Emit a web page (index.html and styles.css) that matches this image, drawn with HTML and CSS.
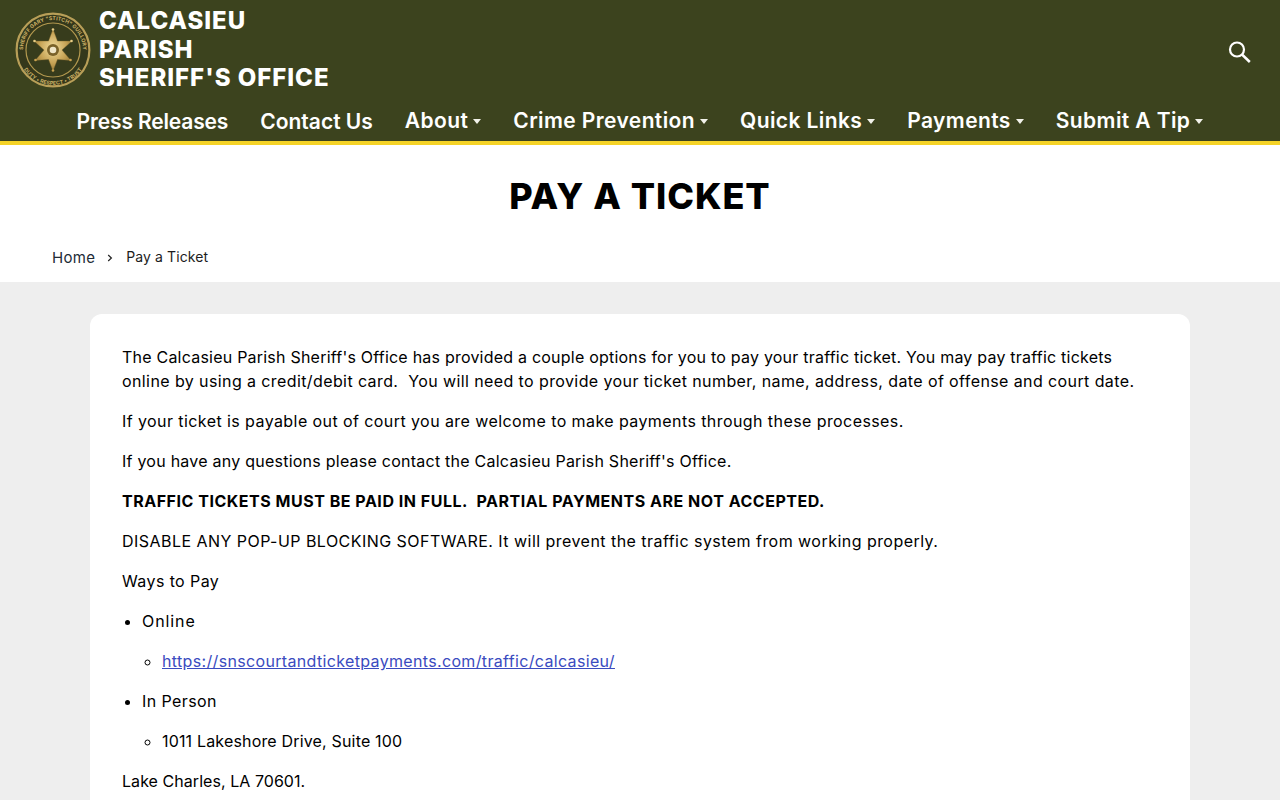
FILE: index.html
```html
<!DOCTYPE html>
<html lang="en">
<head>
<meta charset="utf-8">
<title>Pay a Ticket</title>
<link rel="stylesheet" href="styles.css">
</head>
<body>
<header class="site-header">
  <div class="top-row">
    <a class="brand" href="#">
      <svg class="seal" viewBox="0 0 76 76" aria-label="Sheriff seal">
        <defs>
          <radialGradient id="gold" cx="50%" cy="45%" r="60%">
            <stop offset="0" stop-color="#f1dc9c"/>
            <stop offset="0.6" stop-color="#c6a355"/>
            <stop offset="1" stop-color="#8f7433"/>
          </radialGradient>
          <path id="arcTop" d="M9.8 48.3 A30 30 0 1 1 66.2 48.3"/>
          <path id="arcBottom" d="M6.3 52.8 A35 35 0 0 0 69.7 52.8"/>
        </defs>
        <circle cx="38" cy="38" r="37.5" fill="#34381b"/>
        <circle cx="38" cy="38" r="36.4" fill="none" stroke="#b89f58" stroke-width="2.2"/>
        <circle cx="38" cy="38" r="27" fill="#373c1c" stroke="#b3994f" stroke-width="1.2"/>
        <text class="seal-text"><textPath href="#arcTop" startOffset="50%" text-anchor="middle">SHERIFF GARY "STITCH" GUILLORY</textPath></text>
        <text class="seal-text"><textPath href="#arcBottom" startOffset="50%" text-anchor="middle">DUTY • RESPECT • TRUST</textPath></text>
        <path d="M38 17 L42.5 29 L57 29 L47 38 L56 48.5 L42.5 47.5 L38 59 L33.5 47.5 L20 48.5 L29 38 L19 29 L33.5 29 Z" fill="url(#gold)" stroke="#6e5a26" stroke-width="0.4"/>
        <circle cx="38" cy="17.5" r="1.3" fill="#e8cd85"/>
        <circle cx="38" cy="58.5" r="1.3" fill="#c9a24f"/>
        <circle cx="19.5" cy="29" r="1.3" fill="#e8cd85"/>
        <circle cx="56.5" cy="29" r="1.3" fill="#e8cd85"/>
        <circle cx="20.5" cy="48" r="1.3" fill="#c9a24f"/>
        <circle cx="55.5" cy="48" r="1.3" fill="#c9a24f"/>
        <circle cx="38" cy="38" r="6" fill="#7a6229"/>
        <circle cx="38" cy="38" r="3.3" fill="#efe6c8"/>
      </svg>
      <span class="brand-name">CALCASIEU<br>PARISH<br>SHERIFF'S OFFICE</span>
    </a>
    <button class="search" type="button" aria-label="Search">
      <svg viewBox="0 0 24 24" width="24" height="24">
        <circle cx="9" cy="9.5" r="7" fill="none" stroke="#fff" stroke-width="2.2"/>
        <path d="M14 14.5 L21.8 22" stroke="#fff" stroke-width="2.5" fill="none"/>
      </svg>
    </button>
  </div>
  <nav class="main-nav">
    <a class="nav-link plain narrow" href="#">Press Releases</a>
    <a class="nav-link plain" href="#">Contact Us</a>
    <a class="nav-link drop" href="#">About</a>
    <a class="nav-link drop" href="#">Crime Prevention</a>
    <a class="nav-link drop" href="#">Quick Links</a>
    <a class="nav-link drop" href="#">Payments</a>
    <a class="nav-link drop" href="#">Submit A Tip</a>
  </nav>
</header>
<section class="page-head">
  <h1>PAY A TICKET</h1>
  <div class="crumbs">
    <a href="#" class="crumb-home">Home</a>
    <svg class="crumb-sep" viewBox="0 0 6 8" width="6" height="8"><path d="M1.2 1 L4.4 4 L1.2 7" fill="none" stroke="#222" stroke-width="1.2"/></svg>
    <span class="crumb-here">Pay a Ticket</span>
  </div>
</section>
<main class="content">
  <article class="card">
    <p><span class="track-22">The Calcasieu Parish Sheriff's Office has provided a couple options for you to pay your traffic ticket. You may pay traffic tickets</span> online by using a credit/debit card.&nbsp; You will need to provide your ticket number, name, address, date of offense and court date.</p>
    <p class="track-42">If your ticket is payable out of court you are welcome to make payments through these processes.</p>
    <p class="track-24">If you have any questions please contact the Calcasieu Parish Sheriff's Office.</p>
    <p><strong>TRAFFIC TICKETS MUST BE PAID IN FULL.&nbsp; PARTIAL PAYMENTS ARE NOT ACCEPTED.</strong></p>
    <p class="track-46">DISABLE ANY POP-UP BLOCKING SOFTWARE. It will prevent the traffic system from working properly.</p>
    <p>Ways to Pay</p>
    <ul>
      <li><span class="track-90">Online</span>
        <ul><li><a href="#">https://snscourtandticketpayments.com/traffic/calcasieu/</a></li></ul>
      </li>
      <li>In Person
        <ul><li class="track-17">1011 Lakeshore Drive, Suite 100</li></ul>
      </li>
    </ul>
    <p class="track-05">Lake Charles, LA 70601.</p>
  </article>
</main>
</body>
</html>
```
FILE: styles.css
```css
* { box-sizing: border-box; }
html, body { margin: 0; padding: 0; }
body {
  font-family: Inter, "Liberation Sans", sans-serif;
  font-size: 16px;
  line-height: 24px;
  color: #000;
  background: #eee;
  height: 800px;
  overflow: hidden;
}
a { color: inherit; text-decoration: none; }

.site-header {
  background: #3c431e;
  border-bottom: 4px solid #f5d327;
  height: 145px;
  display: flex;
  flex-direction: column;
}
.top-row {
  display: flex;
  justify-content: space-between;
  align-items: center;
  height: 99px;
  padding: 1px 28px 0 15px;
}
.brand { display: flex; align-items: center; gap: 8px; color: #fff; }
.seal { width: 76px; height: 76px; flex: none; }
.seal-text { font-size: 5.2px; font-weight: 700; fill: #cdb266; letter-spacing: 0.1px; }
.brand-name {
  font-weight: 800;
  font-size: 24px;
  line-height: 28.6px;
  letter-spacing: 0.98px;
}
.search { background: none; border: 0; padding: 0; width: 24px; height: 24px; margin-top: 4px; }
.search svg { display: block; }

.main-nav {
  display: flex;
  justify-content: center;
  gap: 32px;
  color: #fff;
  padding-top: 7px;
}
.nav-link { font-weight: 600; font-size: 21px; line-height: 28px; white-space: nowrap; display: flex; align-items: center; }
.nav-link.plain { padding-top: 2px; }
.nav-link.narrow { letter-spacing: -0.15px; }
.nav-link.drop { letter-spacing: 0.4px; }
.nav-link.drop::after {
  content: "";
  margin-left: 5px;
  margin-top: 1px;
  border-left: 4px solid transparent;
  border-right: 4px solid transparent;
  border-top: 5px solid #f2f2ea;
}

.page-head {
  background: #fff;
  height: 137px;
  padding: 27px 52px 0;
}
h1 {
  margin: 0;
  text-align: center;
  font-weight: 800;
  font-size: 36px;
  line-height: 48px;
  letter-spacing: 0.95px;
}
.crumbs {
  margin-top: 26px;
  display: flex;
  align-items: center;
  font-size: 14px;
  line-height: 22px;
  color: #1c1c1c;
}
.crumb-home { color: #222b36; font-size: 15px; letter-spacing: 0.3px; padding-top: 1px; }
.crumb-sep { margin: 1px 13px 0 12px; }
.crumb-here { letter-spacing: 0.1px; margin-top: -1px; }

.content { padding: 32px 90px 0; }
.card {
  background: #fff;
  border-radius: 12px;
  padding: 31px 32px 32px;
  height: 600px;
  letter-spacing: 0.4px;
}
.card p { margin: 0 0 16px; }
.card strong { letter-spacing: 0.52px; }
.card > ul, .card ul ul { margin: 0; padding-left: 20px; }
.card > ul > li > ul { margin-top: 16px; list-style: circle; }
.card li { margin-bottom: 16px; }
.card ul ul li { margin-bottom: 16px; }
.card a { color: #3a4bc0; text-decoration: underline; letter-spacing: 0.34px; }
.track-05 { letter-spacing: 0.05px; }
.track-17 { letter-spacing: 0.17px; }
.track-22 { letter-spacing: 0.22px; }
.track-24 { letter-spacing: 0.24px; }
.track-42 { letter-spacing: 0.42px; }
.track-46 { letter-spacing: 0.46px; }
.track-90 { letter-spacing: 0.9px; }
```
